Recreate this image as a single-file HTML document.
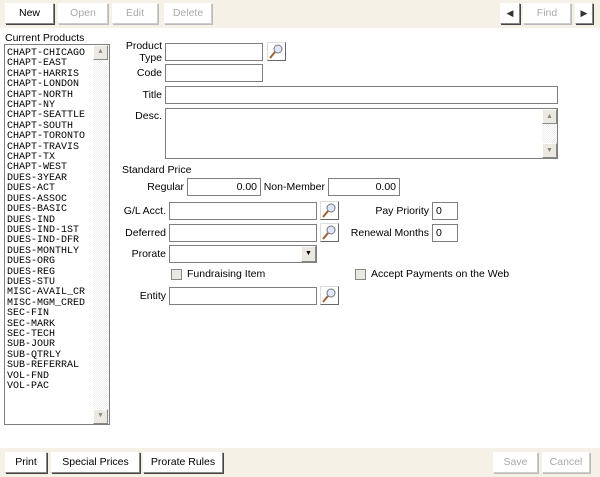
<!DOCTYPE html><html><head><style>
body{margin:0;width:600px;height:477px;background:#fff;font-family:"Liberation Sans",Tahoma,sans-serif;font-size:10.5px;position:relative;overflow:hidden;color:#000}
.a{position:absolute;white-space:nowrap}
.bar{position:absolute;left:0;width:600px;background:#f5f1e6}
.btn{position:absolute;background:#fff;border:1px solid #fff;border-right-color:#888;border-bottom-color:#888;box-shadow:1px 1px 0 #444;text-align:center;line-height:19px;box-sizing:border-box;height:21px;white-space:nowrap}
.dis{color:#aaa;box-shadow:1px 1px 0 #bbb;border-right-color:#ccc;border-bottom-color:#ccc}
.in{position:absolute;border:1px solid #7f7f7f;background:#fff;box-sizing:border-box;height:18px;line-height:14px}
.l{position:absolute;text-align:right;white-space:nowrap}
.mag{position:absolute;width:19px;height:19px;border:1px solid #ddd;border-right-color:#666;border-bottom-color:#666;box-sizing:border-box;background:#fff}
.list{position:absolute;left:4px;top:44px;width:106px;height:381px;border:1px solid #7f7f7f;box-sizing:border-box;font-family:"Liberation Mono",monospace;font-size:10px;line-height:10.4px;padding:4px 0 0 2px}
.sb{position:absolute;right:0;top:0;width:16px;height:100%;background:repeating-conic-gradient(#eee 0 25%,#fff 0 50%) 0 0/2px 2px}
.sbb{position:absolute;left:0;width:15px;height:15px;background:#eceae0;border:1px solid #fff;border-right-color:#888;border-bottom-color:#888;box-sizing:border-box;font-size:7px;text-align:center;line-height:13px;color:#888}
.cb{position:absolute;width:11px;height:11px;border:1px solid #888;background:#e8e8e0;box-sizing:border-box}
</style></head><body>
<div class="bar" style="top:0;height:28px"></div>
<div class="btn" style="left:5px;top:3px;width:49px">New</div>
<div class="btn dis" style="left:58px;top:3px;width:50px">Open</div>
<div class="btn dis" style="left:112px;top:3px;width:46px">Edit</div>
<div class="btn dis" style="left:164px;top:3px;width:48px">Delete</div>
<div class="btn" style="left:500px;top:3px;width:20px;font-size:9px;color:#333">&#9664;</div>
<div class="btn dis" style="left:523px;top:3px;width:48px">Find</div>
<div class="btn" style="left:575px;top:3px;width:18px;font-size:9px;color:#333">&#9654;</div>
<div class="a" style="left:5px;top:32px">Current Products</div>
<div class="list"><div class="sb"><div class="sbb" style="top:0">&#9650;</div><div class="sbb" style="bottom:0">&#9660;</div></div>
CHAPT-CHICAGO<br>CHAPT-EAST<br>CHAPT-HARRIS<br>CHAPT-LONDON<br>CHAPT-NORTH<br>CHAPT-NY<br>CHAPT-SEATTLE<br>CHAPT-SOUTH<br>CHAPT-TORONTO<br>CHAPT-TRAVIS<br>CHAPT-TX<br>CHAPT-WEST<br>DUES-3YEAR<br>DUES-ACT<br>DUES-ASSOC<br>DUES-BASIC<br>DUES-IND<br>DUES-IND-1ST<br>DUES-IND-DFR<br>DUES-MONTHLY<br>DUES-ORG<br>DUES-REG<br>DUES-STU<br>MISC-AVAIL_CR<br>MISC-MGM_CRED<br>SEC-FIN<br>SEC-MARK<br>SEC-TECH<br>SUB-JOUR<br>SUB-QTRLY<br>SUB-REFERRAL<br>VOL-FND<br>VOL-PAC</div>
<div class="l" style="right:438px;top:40px;line-height:12px">Product<br>Type</div>
<div class="in" style="left:165px;top:43px;width:98px"></div>
<div class="mag" style="left:267px;top:42px"><svg width="17" height="17"><circle cx="10" cy="6" r="4" fill="#dde8ff" stroke="#777"/><line x1="7" y1="9" x2="2" y2="15" stroke="#a06030" stroke-width="2"/></svg></div>
<div class="l" style="right:438px;top:67px">Code</div>
<div class="in" style="left:165px;top:64px;width:98px"></div>
<div class="l" style="right:438px;top:89px">Title</div>
<div class="in" style="left:165px;top:86px;width:393px"></div>
<div class="l" style="right:438px;top:110px">Desc.</div>
<div class="in" style="left:165px;top:108px;width:393px;height:51px"><div class="sb" style="width:15px"><div class="sbb" style="top:0">&#9650;</div><div class="sbb" style="bottom:0">&#9660;</div></div></div>
<div class="a" style="left:122px;top:164px">Standard Price</div>
<div class="l" style="right:416px;top:181px">Regular</div>
<div class="in" style="left:187px;top:178px;width:74px;text-align:right;padding:1px 3px">0.00</div>
<div class="l" style="right:275px;top:181px">Non-Member</div>
<div class="in" style="left:328px;top:178px;width:72px;text-align:right;padding:1px 3px">0.00</div>
<div class="l" style="right:434px;top:205px">G/L Acct.</div>
<div class="in" style="left:169px;top:202px;width:148px"></div>
<div class="mag" style="left:320px;top:201px"><svg width="17" height="17"><circle cx="10" cy="6" r="4" fill="#dde8ff" stroke="#777"/><line x1="7" y1="9" x2="2" y2="15" stroke="#a06030" stroke-width="2"/></svg></div>
<div class="l" style="right:171px;top:205px">Pay Priority</div>
<div class="in" style="left:432px;top:202px;width:26px;padding:1px 3px">0</div>
<div class="l" style="right:434px;top:227px">Deferred</div>
<div class="in" style="left:169px;top:224px;width:148px"></div>
<div class="mag" style="left:320px;top:223px"><svg width="17" height="17"><circle cx="10" cy="6" r="4" fill="#dde8ff" stroke="#777"/><line x1="7" y1="9" x2="2" y2="15" stroke="#a06030" stroke-width="2"/></svg></div>
<div class="l" style="right:171px;top:227px">Renewal Months</div>
<div class="in" style="left:432px;top:224px;width:26px;padding:1px 3px">0</div>
<div class="l" style="right:434px;top:248px">Prorate</div>
<div class="in" style="left:169px;top:245px;width:148px"><div class="sbb" style="left:auto;right:0;top:0;width:15px;height:16px;color:#000">&#9660;</div></div>
<div class="cb" style="left:171px;top:269px"></div><div class="a" style="left:187px;top:268px">Fundraising Item</div>
<div class="cb" style="left:355px;top:269px"></div><div class="a" style="left:371px;top:268px">Accept Payments on the Web</div>
<div class="l" style="right:434px;top:290px">Entity</div>
<div class="in" style="left:169px;top:287px;width:148px"></div>
<div class="mag" style="left:320px;top:286px"><svg width="17" height="17"><circle cx="10" cy="6" r="4" fill="#dde8ff" stroke="#777"/><line x1="7" y1="9" x2="2" y2="15" stroke="#a06030" stroke-width="2"/></svg></div>
<div class="bar" style="top:448px;height:29px"></div>
<div class="btn" style="left:5px;top:452px;width:42px">Print</div>
<div class="btn" style="left:51px;top:452px;width:89px">Special Prices</div>
<div class="btn" style="left:143px;top:452px;width:80px">Prorate Rules</div>
<div class="btn dis" style="left:493px;top:452px;width:45px">Save</div>
<div class="btn dis" style="left:542px;top:452px;width:48px">Cancel</div>
</body></html>
